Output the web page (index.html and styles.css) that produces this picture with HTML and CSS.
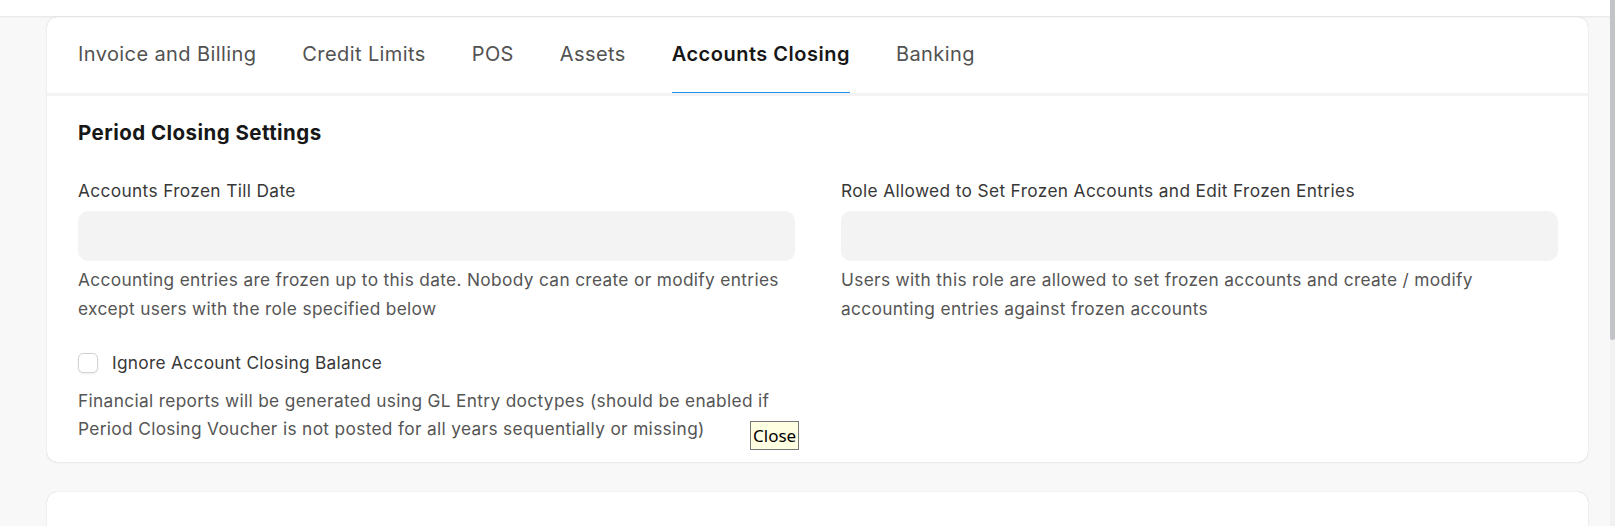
FILE: index.html
```html
<!DOCTYPE html>
<html lang="en">
<head>
<meta charset="utf-8">
<title>Accounts Settings</title>
<link rel="stylesheet" href="styles.css">
</head>
<body>
<div class="app">
  <div class="main">
    <div class="topbar"></div>
    <div class="content">
      <div class="card">
        <div class="tabs">
          <div class="tab">Invoice and Billing</div>
          <div class="tab">Credit Limits</div>
          <div class="tab">POS</div>
          <div class="tab">Assets</div>
          <div class="tab active">Accounts Closing</div>
          <div class="tab">Banking</div>
        </div>
        <div class="section">
          <div class="section-head">Period Closing Settings</div>
          <div class="columns">
            <div class="column">
              <div class="field">
                <div class="label">Accounts Frozen Till Date</div>
                <div class="input"></div>
                <div class="desc">Accounting entries are frozen up to this date. Nobody can create or modify entries<br>except users with the role specified below</div>
              </div>
              <div class="field check-field">
                <div class="check-row">
                  <span class="checkbox"></span>
                  <span class="check-label">Ignore Account Closing Balance</span>
                </div>
                <div class="desc desc-check">Financial reports will be generated using GL Entry doctypes (should be enabled if<br>Period Closing Voucher is not posted for all years sequentially or missing)</div>
              </div>
            </div>
            <div class="column">
              <div class="field">
                <div class="label">Role Allowed to Set Frozen Accounts and Edit Frozen Entries</div>
                <div class="input"></div>
                <div class="desc">Users with this role are allowed to set frozen accounts and create / modify<br>accounting entries against frozen accounts</div>
              </div>
            </div>
          </div>
        </div>
        <div class="tooltip">Close</div>
      </div>
      <div class="card card-next"></div>
    </div>
  </div>
  <div class="scrollbar"><div class="thumb"></div></div>
</div>
</body>
</html>
```

FILE: styles.css
```css
html, body {
  margin: 0;
  padding: 0;
  height: 526px;
  overflow: hidden;
}

body {
  background: #f8f8f8;
  font-family: Inter, "Noto Sans", sans-serif;
  color: #383838;
}

.app {
  display: flex;
  height: 526px;
}

.main {
  flex: 1;
  display: flex;
  flex-direction: column;
  min-width: 0;
  overflow: hidden;
}

.topbar {
  height: 16px;
  flex: none;
  background: #ffffff;
  box-shadow: 0 1px 2px rgba(0, 0, 0, 0.08);
  position: relative;
  z-index: 2;
}

.content {
  flex: 1;
  min-height: 0;
  padding: 1px 22px 0 47px;
  display: flex;
  flex-direction: column;
  gap: 30px;
}

.card {
  background: #ffffff;
  border-radius: 10px;
  box-shadow: 0 0 1px rgba(0, 0, 0, 0.25), 0 1px 3px rgba(0, 0, 0, 0.04);
  position: relative;
  flex: none;
}

.card-next {
  flex: 1;
  border-radius: 10px 10px 0 0;
}

.tabs {
  display: flex;
  gap: 46px;
  padding-left: 31px;
  border-bottom: 3px solid #f3f3f3;
}

.tab {
  height: 76px;
  box-sizing: border-box;
  display: flex;
  align-items: center;
  padding-bottom: 2px;
  border-bottom: 1px solid transparent;
  font-size: 20px;
  line-height: 24px;
  letter-spacing: 0.4px;
  color: #525252;
  white-space: nowrap;
}

.tab.active {
  color: #171717;
  font-weight: 600;
  letter-spacing: 0.5px;
  border-bottom-color: #2490ef;
}

.section {
  padding: 24px 30px 18px 31px;
}

.section-head {
  font-size: 20.5px;
  line-height: 25px;
  font-weight: 650;
  letter-spacing: 0.45px;
  color: #171717;
  margin-bottom: 35px;
}

.columns {
  display: grid;
  grid-template-columns: 1fr 1fr;
  column-gap: 46px;
}

.column {
  display: flex;
  flex-direction: column;
}

.label {
  font-size: 17.3px;
  line-height: 21px;
  letter-spacing: 0.36px;
  color: #383838;
  margin-bottom: 10px;
  white-space: nowrap;
}

.input {
  height: 50px;
  background: #f3f3f3;
  border-radius: 10px;
}

.desc {
  font-size: 17.3px;
  line-height: 28.5px;
  letter-spacing: 0.34px;
  color: #555555;
  margin-top: 5px;
  white-space: nowrap;
}

.check-field {
  margin-top: 29px;
}

.check-row {
  display: flex;
  align-items: center;
  gap: 14px;
  height: 21px;
}

.checkbox {
  width: 20px;
  height: 20px;
  box-sizing: border-box;
  border: 1px solid #cfd2d6;
  border-radius: 5px;
  background: #ffffff;
  box-shadow: 0 1px 2px rgba(0, 0, 0, 0.08);
  flex: none;
}

.check-label {
  font-size: 17.3px;
  line-height: 21px;
  letter-spacing: 0.3px;
  color: #383838;
  white-space: nowrap;
}

.desc-check {
  margin-top: 13.5px;
}

.tooltip {
  position: absolute;
  left: 703px;
  top: 404px;
  height: 29px;
  box-sizing: border-box;
  padding: 0 2px;
  border: 1px solid #767676;
  background: #ffffe1;
  color: #000000;
  font-family: "Noto Sans", "Open Sans", sans-serif;
  font-size: 17px;
  line-height: 27px;
  z-index: 5;
}

.scrollbar {
  width: 5px;
  flex: none;
  background: #f1f1f1;
}

.thumb {
  height: 340px;
  background: #c1c3c7;
  border-radius: 0 0 3px 3px;
}
```
